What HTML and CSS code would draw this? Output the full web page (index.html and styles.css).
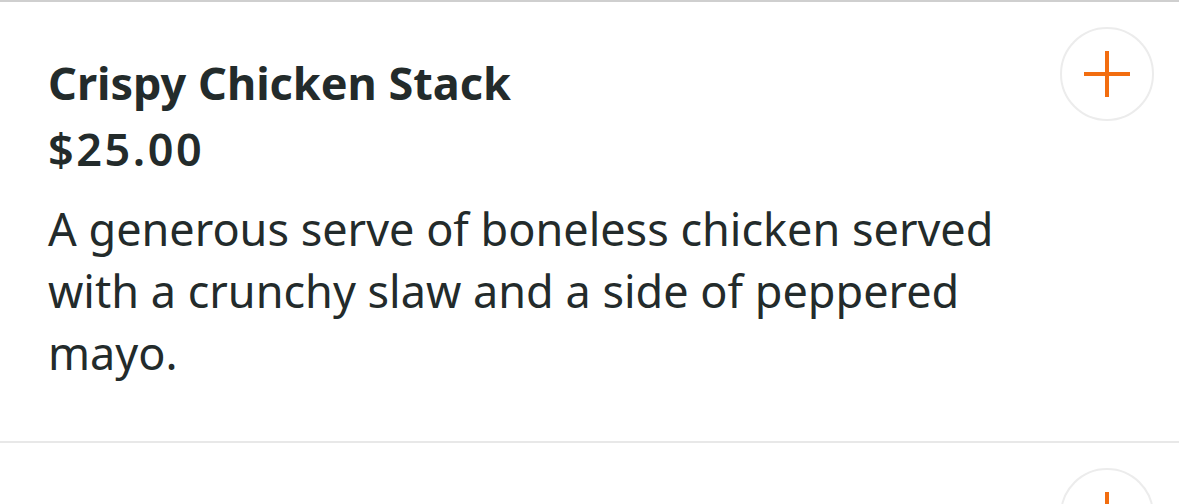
FILE: index.html
```html
<!DOCTYPE html>
<html>
<head>
<meta charset="utf-8">
<link rel="stylesheet" href="styles.css">
</head>
<body>
<div class="list">
  <div class="item">
    <div class="info">
      <h2 class="title">Crispy Chicken Stack</h2>
      <div class="price">$25.00</div>
      <p class="desc">A generous serve of boneless chicken served with a crunchy slaw and a side of peppered mayo.</p>
    </div>
    <button class="add" aria-label="Add">
      <svg width="46" height="46" viewBox="0 0 46 46"><path d="M23 0V46M0 23H46" stroke="#f26d0f" stroke-width="4" fill="none"/></svg>
    </button>
  </div>
  <div class="item">
    <div class="info">
      <h2 class="title">&nbsp;</h2>
    </div>
    <button class="add" aria-label="Add">
      <svg width="46" height="46" viewBox="0 0 46 46"><path d="M23 0V46M0 23H46" stroke="#f26d0f" stroke-width="4" fill="none"/></svg>
    </button>
  </div>
</div>
</body>
</html>
```

FILE: styles.css
```css
html, body {
  margin: 0;
  padding: 0;
  background: #fff;
}
html {
  height: 504px;
  overflow: hidden;
}
body {
  font-family: "Noto Sans", "Open Sans", sans-serif;
  color: #232b2b;
  border-top: 2px solid #cfcfcf;
}
.item {
  display: flex;
  justify-content: space-between;
  align-items: flex-start;
  padding: 25px 25px 57px 48px;
  border-bottom: 2px solid #e8e8e8;
}
.info {
  width: 1005px;
  margin-top: 25px;
}
.title {
  margin: 0;
  font-size: 45px;
  font-weight: 700;
  line-height: 62px;
}
.price {
  margin-top: 4px;
  font-size: 45px;
  font-weight: 600;
  letter-spacing: 2.5px;
  line-height: 62px;
}
.desc {
  margin: 18px 0 0;
  font-size: 45px;
  font-weight: 400;
  line-height: 62px;
}
.add {
  width: 94px;
  height: 94px;
  border-radius: 50%;
  border: 2px solid #ececec;
  background: #fff;
  display: flex;
  align-items: center;
  justify-content: center;
  padding: 0;
  flex-shrink: 0;
}
```
